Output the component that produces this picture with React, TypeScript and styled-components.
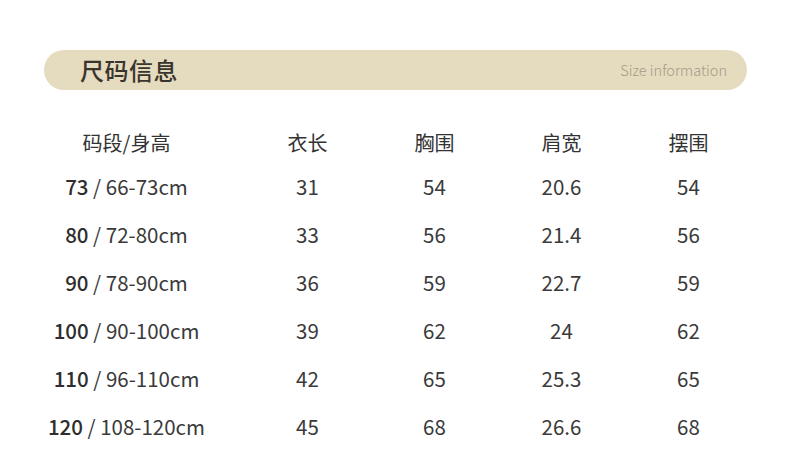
import styled, { createGlobalStyle } from 'styled-components';

const GlobalStyle = createGlobalStyle`
  html, body {
    margin: 0;
    padding: 0;
    background: #ffffff;
  }
  body {
    font-family: "Noto Sans CJK SC", sans-serif;
  }
`;

interface SizeRow {
  code: string;
  height: string;
  length: string;
  chest: string;
  shoulder: string;
  hem: string;
}

const rows: SizeRow[] = [
  { code: '73', height: '66-73cm', length: '31', chest: '54', shoulder: '20.6', hem: '54' },
  { code: '80', height: '72-80cm', length: '33', chest: '56', shoulder: '21.4', hem: '56' },
  { code: '90', height: '78-90cm', length: '36', chest: '59', shoulder: '22.7', hem: '59' },
  { code: '100', height: '90-100cm', length: '39', chest: '62', shoulder: '24', hem: '62' },
  { code: '110', height: '96-110cm', length: '42', chest: '65', shoulder: '25.3', hem: '65' },
  { code: '120', height: '108-120cm', length: '45', chest: '68', shoulder: '26.6', hem: '68' },
];

const headers = ['码段/身高', '衣长', '胸围', '肩宽', '摆围'];

const Page = styled.div`
  width: 790px;
  height: 472px;
  padding-top: 50px;
  box-sizing: border-box;
  background: #fff;
`;

const TitleBar = styled.div`
  margin-left: 44px;
  width: 703px;
  height: 40px;
  border-radius: 20px;
  background: #e5dbbf;
  display: flex;
  align-items: center;
  justify-content: space-between;
  padding: 0 20px 0 36px;
  box-sizing: border-box;
`;

const Title = styled.div`
  font-family: "Noto Sans CJK SC", sans-serif;
  font-size: 24px;
  font-weight: 500;
  color: #3a342e;
  letter-spacing: 0.5px;
  line-height: 1;
`;

const Subtitle = styled.div`
  font-family: "Noto Sans CJK SC", sans-serif;
  font-size: 14.5px;
  font-weight: 300;
  color: #a39b88;
  line-height: 1;
`;

const Table = styled.div`
  margin-top: 34px;
  margin-left: 9px;
  display: grid;
  grid-template-columns: 235px repeat(4, 127px);
  grid-template-rows: 38px repeat(6, 48px);
  justify-items: center;
  align-items: center;
  color: #333;
`;

const HeadCell = styled.div`
  font-family: "Noto Sans CJK SC", sans-serif;
  font-size: 20px;
  line-height: 1;
  color: #333;
`;

const Cell = styled.div`
  font-family: "Noto Sans CJK SC", sans-serif;
  font-size: 20.5px;
  line-height: 1;
  color: #3a3a3a;
`;

const Code = styled.span`
  font-weight: 500;
  color: #2e2e2e;
`;

export default function App() {
  return (
    <Page>
      <GlobalStyle />
      <TitleBar>
        <Title>尺码信息</Title>
        <Subtitle>Size information</Subtitle>
      </TitleBar>
      <Table>
        {headers.map((h) => (
          <HeadCell key={h}>{h}</HeadCell>
        ))}
        {rows.map((r) => [
          <Cell key={r.code + 'a'}>
            <Code>{r.code}</Code> / {r.height}
          </Cell>,
          <Cell key={r.code + 'b'}>{r.length}</Cell>,
          <Cell key={r.code + 'c'}>{r.chest}</Cell>,
          <Cell key={r.code + 'd'}>{r.shoulder}</Cell>,
          <Cell key={r.code + 'e'}>{r.hem}</Cell>,
        ])}
      </Table>
    </Page>
  );
}
